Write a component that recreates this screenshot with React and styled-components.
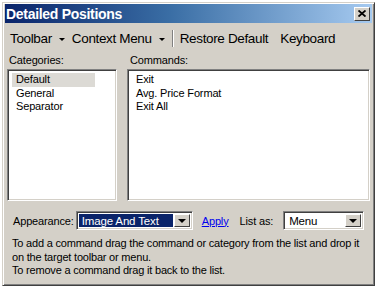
import styled, { createGlobalStyle } from "styled-components";

const Global = createGlobalStyle`
	html, body {
		margin: 0;
		padding: 0;
		background: #ffffff;
	}
	body {
		font-family: "Liberation Sans", Arial, sans-serif;
		font-size: 11px;
		letter-spacing: -0.15px;
		color: #000;
	}
`;

const Window = styled.div`
	margin: 2px 0 0 2px;
	width: 373px;
	height: 284px;
	box-sizing: border-box;
	background: #d4d0c8;
	border-top: 1px solid #d4d0c8;
	border-left: 1px solid #d4d0c8;
	border-right: 1px solid #404040;
	border-bottom: 1px solid #404040;
	box-shadow: inset 1px 1px 0 #ffffff, inset -1px -1px 0 #808080;
	padding: 1px 2px 2px 2px;
	display: flex;
	flex-direction: column;
`;

const TitleBar = styled.div`
	height: 19px;
	background: linear-gradient(to right, #0a246a 0%, #3a6ea5 45%, #a6caf0 100%);
	display: flex;
	align-items: center;
	justify-content: space-between;
	padding: 0 2px 0 1px;
`;

const Title = styled.span`
	color: #fff;
	font-weight: bold;
	font-size: 14px;
	letter-spacing: -0.3px;
`;

const CloseButton = styled.div`
	width: 16px;
	height: 14px;
	box-sizing: border-box;
	background: #d4d0c8;
	border-top: 1px solid #fff;
	border-left: 1px solid #fff;
	border-right: 1px solid #404040;
	border-bottom: 1px solid #404040;
	display: flex;
	align-items: center;
	justify-content: center;
`;

const MenuBar = styled.div`
	height: 28px;
	display: flex;
	align-items: center;
	padding: 3px 0 0 5px;
	box-sizing: border-box;
	font-size: 13.5px;
	letter-spacing: -0.35px;
	white-space: nowrap;
`;

const MenuItem = styled.span`
	display: flex;
	align-items: center;
	gap: 7px;
	margin-right: ${(p) => p.$gap || 7}px;
`;

const Caret = styled.span`
	width: 0;
	height: 0;
	border-left: 3px solid transparent;
	border-right: 3px solid transparent;
	border-top: 3px solid #000;
	margin-top: 1px;
`;

const MenuSep = styled.span`
	width: 1px;
	height: 17px;
	background: #808080;
	box-shadow: 1px 0 0 #fff;
	margin-right: 7px;
`;

const Panels = styled.div`
	display: grid;
	grid-template-columns: 110px 1fr;
	column-gap: 10px;
	padding: 3px 2px 0 2px;
`;

const Panel = styled.div`
	display: flex;
	flex-direction: column;
`;

const Label = styled.label`
	padding-left: ${(p) => p.$indent || 2}px;
	height: 13px;
	line-height: 13px;
	margin-bottom: 2px;
`;

const ListBox = styled.div`
	height: 132px;
	box-sizing: border-box;
	background: #fff;
	border-top: 1px solid #808080;
	border-left: 1px solid #808080;
	border-right: 1px solid #fff;
	border-bottom: 1px solid #fff;
	box-shadow: inset 1px 1px 0 #404040, inset -1px -1px 0 #d4d0c8;
	padding: 3px 4px;
`;

const ListItem = styled.div`
	height: 13.5px;
	line-height: 13.5px;
	padding-left: 4px;
	width: ${(p) => (p.$selected ? "79px" : "auto")};
	background: ${(p) => (p.$selected ? "#dcdad5" : "transparent")};
`;

const OptionsRow = styled.div`
	display: flex;
	align-items: center;
	padding: 10px 0 0 8px;
	height: 19px;
	white-space: nowrap;
`;

const Select = styled.div`
	width: ${(p) => p.$width}px;
	height: 19px;
	box-sizing: border-box;
	background: #fff;
	border-top: 1px solid #808080;
	border-left: 1px solid #808080;
	border-right: 1px solid #fff;
	border-bottom: 1px solid #fff;
	box-shadow: inset 1px 1px 0 #404040, inset -1px -1px 0 #d4d0c8;
	display: flex;
	align-items: stretch;
	padding: 2px;
	margin-left: ${(p) => p.$ml || 0}px;
`;

const SelectValue = styled.div`
	flex: 1;
	display: flex;
	align-items: center;
	padding-left: 3px;
	margin-right: 1px;
	font-size: 11.5px;
	background: ${(p) => (p.$active ? "#0a246a" : "transparent")};
	color: ${(p) => (p.$active ? "#fff" : "#000")};
`;

const ArrowButton = styled.div`
	width: 16px;
	box-sizing: border-box;
	background: #d4d0c8;
	border-top: 1px solid #fff;
	border-left: 1px solid #fff;
	border-right: 1px solid #404040;
	border-bottom: 1px solid #404040;
	display: flex;
	align-items: center;
	justify-content: center;
`;

const DownArrow = styled.span`
	width: 0;
	height: 0;
	border-left: 4px solid transparent;
	border-right: 4px solid transparent;
	border-top: 4px solid #000;
`;

const Link = styled.a`
	color: #0000ee;
	text-decoration: underline;
	margin-left: 9px;
	cursor: pointer;
`;

const Text = styled.span`
	margin-left: ${(p) => p.$ml || 0}px;
`;

const Help = styled.div`
	padding: 7px 0 0 7px;
	line-height: 13.5px;
	letter-spacing: -0.2px;
	white-space: nowrap;
`;

const CloseIcon = () => (
	<svg width="8" height="7" viewBox="0 0 8 7">
		<path d="M0.5 0.5 L7.5 6.5 M7.5 0.5 L0.5 6.5" stroke="#000" strokeWidth="1.8" />
	</svg>
);

const Dropdown = ({ width, value, active, ml }) => (
	<Select $width={width} $ml={ml}>
		<SelectValue $active={active}>{value}</SelectValue>
		<ArrowButton>
			<DownArrow />
		</ArrowButton>
	</Select>
);

const categories = ["Default", "General", "Separator"];
const commands = ["Exit", "Avg. Price Format", "Exit All"];

export default function App() {
	return (
		<>
			<Global />
			<Window>
				<TitleBar>
					<Title>Detailed Positions</Title>
					<CloseButton>
						<CloseIcon />
					</CloseButton>
				</TitleBar>
				<MenuBar>
					<MenuItem>
						Toolbar <Caret />
					</MenuItem>
					<MenuItem>
						Context Menu <Caret />
					</MenuItem>
					<MenuSep />
					<MenuItem $gap={12}>Restore Default</MenuItem>
					<MenuItem>Keyboard</MenuItem>
				</MenuBar>
				<Panels>
					<Panel>
						<Label>Categories:</Label>
						<ListBox>
							{categories.map((c, i) => (
								<ListItem key={c} $selected={i === 0}>
									{c}
								</ListItem>
							))}
						</ListBox>
					</Panel>
					<Panel>
						<Label $indent={3}>Commands:</Label>
						<ListBox>
							{commands.map((c) => (
								<ListItem key={c}>{c}</ListItem>
							))}
						</ListBox>
					</Panel>
				</Panels>
				<OptionsRow>
					<Text>Appearance:</Text>
					<Dropdown width={117} value="Image And Text" active ml={2} />
					<Link>Apply</Link>
					<Text $ml={11}>List as:</Text>
					<Dropdown width={81} value="Menu" ml={10} />
				</OptionsRow>
				<Help>
					To add a command drag the command or category from the list and drop it
					<br />
					on the target toolbar or menu.
					<br />
					To remove a command drag it back to the list.
				</Help>
			</Window>
		</>
	);
}
